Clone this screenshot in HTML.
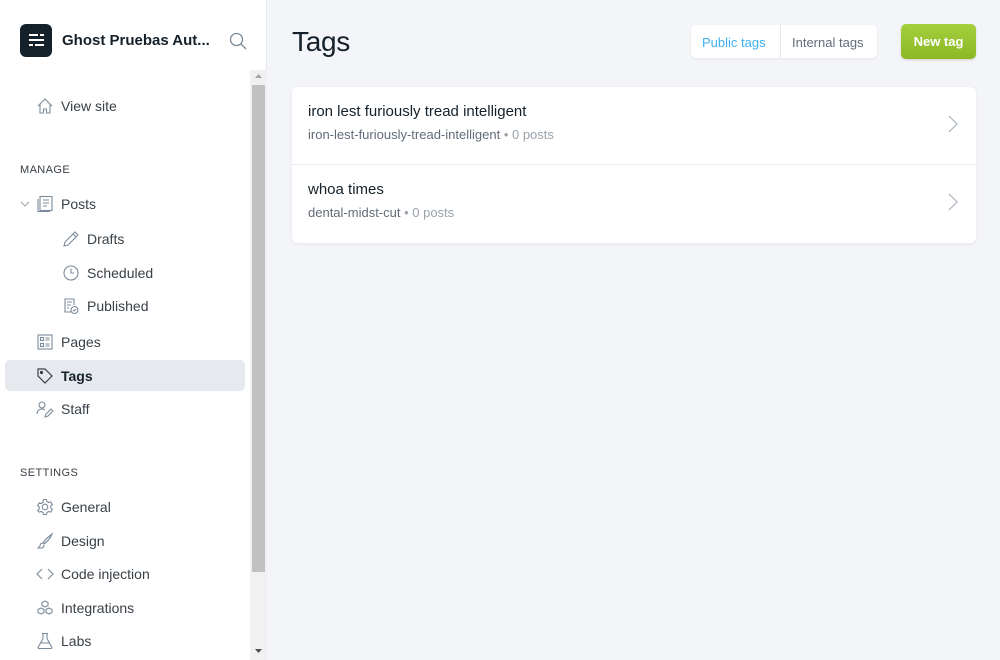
<!DOCTYPE html>
<html><head><meta charset="utf-8"><style>
*{box-sizing:border-box;margin:0;padding:0}
body{width:1000px;height:660px;overflow:hidden;font-family:"Liberation Sans",sans-serif;background:#f4f5f8;color:#15212a;position:relative}
.side{position:absolute;left:0;top:0;width:267px;height:660px;background:#fff;border-right:1px solid #e5e8ec}
.logo{position:absolute;left:20px;top:24px;width:32px;height:33px;background:#15212a;border-radius:6px}
.title{position:absolute;left:62px;top:32px;font-size:15px;font-weight:bold;color:#15212a;letter-spacing:0}
.search{position:absolute;left:229px;top:32px}
.sb{position:absolute;left:250px;top:70px;width:17px;height:590px;background:#f1f1f1}
.thumb{position:absolute;left:252px;top:85px;width:13px;height:487px;background:#c1c1c1}
.item{position:absolute;font-size:14px;color:#394047;display:flex;align-items:center}
.item svg{position:absolute;left:-25px;top:-1px}
.head{position:absolute;left:20px;font-size:11px;letter-spacing:.4px;color:#394047}
.sel{position:absolute;left:5px;top:360px;width:240px;height:31px;background:#e6e9ee;border-radius:5px}
.main h1{position:absolute;left:292px;top:26px;font-size:28px;font-weight:normal;color:#15212a;letter-spacing:-.3px}
.seg{position:absolute;left:691px;top:25px;width:186px;height:33px;background:#fff;border-radius:5px;box-shadow:0 1px 2px rgba(0,0,0,.06);font-size:13px}
.seg span{position:absolute;top:10px}
.btn{position:absolute;left:901px;top:24px;width:75px;height:35px;border-radius:5px;background:linear-gradient(#a4d03d,#8cb826);color:#fff;font-weight:bold;font-size:13px;text-align:center;line-height:35px;box-shadow:0 1px 2px rgba(0,0,0,.15)}
.card{position:absolute;left:292px;top:87px;width:684px;height:156px;background:#fff;border-radius:6px;box-shadow:0 1px 3px rgba(0,0,0,.06)}
.row{position:absolute;left:0;width:684px;height:78px}
.row .n{position:absolute;left:16px;top:16px;font-size:15px;color:#15212a}
.row .s{position:absolute;left:16px;top:40px;font-size:13px;color:#626d79}
.row .s i{font-style:normal;color:#9aa3ab}
.row svg{position:absolute;right:18px;top:28px}
</style></head><body>
<div class="side">
<div class="logo"><svg width="32" height="33" viewBox="0 0 32 33"><g fill="#fff"><rect x="9" y="10" width="9" height="2"/><rect x="20" y="10" width="4" height="2"/><rect x="9" y="15" width="15" height="2"/><rect x="9" y="20" width="4" height="2"/><rect x="15" y="20" width="9" height="2"/></g></svg></div>
<div class="title">Ghost Pruebas Aut...</div>
<svg class="search" width="18" height="18" viewBox="0 0 18 18" fill="none" stroke="#7c8b9a" stroke-width="1.3"><circle cx="7.5" cy="7.5" r="6"/><path d="M12 12l5 5"/></svg>
<div class="sb"></div><div class="thumb"></div>
<svg style="position:absolute;left:254px;top:73px" width="9" height="6"><path d="M1 5h7L4.5 1z" fill="#a3a3a3"/></svg>
<svg style="position:absolute;left:254px;top:648px" width="9" height="6"><path d="M1 1h7L4.5 5z" fill="#505050"/></svg>
<div class="sel"></div>
<div class="item" style="left:61px;top:98px">View site<svg width="18" height="18" viewBox="0 0 18 18" fill="none" stroke="#7c8b9a" stroke-width="1.1"><path d="M2 9L9 2l7 7M4 7.5V16h3.5v-4h3v4H14V7.5"/></svg></div>
<div class="head" style="top:164px">MANAGE</div>
<svg style="position:absolute;left:20px;top:200px" width="10" height="8" fill="none" stroke="#9aa3ab"><path d="M1 2l4 4 4-4"/></svg>
<div class="item" style="left:61px;top:196px">Posts<svg width="18" height="18" viewBox="0 0 18 18" fill="none" stroke="#7c8b9a" stroke-width="1.1"><rect x="4" y="1.5" width="12" height="14"/><path d="M2 4v12.5h12M7 5h6M7 8h6M7 11h4"/></svg></div>
<div class="item" style="left:87px;top:231px">Drafts<svg width="18" height="18" viewBox="0 0 18 18" fill="none" stroke="#7c8b9a" stroke-width="1.1"><path d="M2 16l1-4L13 2l3 3L6 15zM11 4l3 3"/></svg></div>
<div class="item" style="left:87px;top:265px">Scheduled<svg width="18" height="18" viewBox="0 0 18 18" fill="none" stroke="#7c8b9a" stroke-width="1.1"><circle cx="9" cy="9" r="7"/><path d="M9 4.5V9h3"/></svg></div>
<div class="item" style="left:87px;top:298px">Published<svg width="18" height="18" viewBox="0 0 18 18" fill="none" stroke="#7c8b9a" stroke-width="1.1"><path d="M9 15H3V2h9v6M5 5h5M5 8h4M5 11h2"/><circle cx="12.5" cy="13" r="3.5"/><path d="M11 13l1 1 2-2"/></svg></div>
<div class="item" style="left:61px;top:334px">Pages<svg width="18" height="18" viewBox="0 0 18 18" fill="none" stroke="#7c8b9a" stroke-width="1.1"><rect x="2" y="2" width="14" height="14"/><rect x="4.5" y="4.5" width="3" height="3"/><rect x="4.5" y="10.5" width="3" height="3"/><path d="M9.5 5h4M9.5 7h4M9.5 11h4M9.5 13h4"/></svg></div>
<div class="item" style="left:61px;top:368px;font-weight:bold;color:#15212a">Tags<svg width="18" height="18" viewBox="0 0 18 18" fill="none" stroke="#394047" stroke-width="1.2"><path d="M2 2h7l7 7-7 7-7-7z"/><circle cx="5.5" cy="5.5" r="1" fill="#394047"/></svg></div>
<div class="item" style="left:61px;top:401px">Staff<svg width="18" height="18" viewBox="0 0 18 18" fill="none" stroke="#7c8b9a" stroke-width="1.1"><circle cx="6" cy="5" r="3"/><path d="M1 14c0-3 2-5 5-5 1.5 0 2.5.5 3 1M9 17l1-3 5-5 2 2-5 5z"/></svg></div>
<div class="head" style="top:467px">SETTINGS</div>
<div class="item" style="left:61px;top:499px">General<svg width="18" height="18" viewBox="0 0 18 18" fill="none" stroke="#7c8b9a" stroke-width="1.1"><circle cx="9" cy="9" r="2.8"/><path d="M7.5 1.5h3l.5 2 1.8 1 2-.6 1.5 2.6-1.5 1.5v2l1.5 1.5-1.5 2.6-2-.6-1.8 1-.5 2h-3l-.5-2-1.8-1-2 .6L1.7 12.5l1.5-1.5V9L1.7 7.5 3.2 4.9l2 .6 1.8-1z"/></svg></div>
<div class="item" style="left:61px;top:533px">Design<svg width="18" height="18" viewBox="0 0 18 18" fill="none" stroke="#7c8b9a" stroke-width="1.1"><path d="M16 2C12 5 9 8 7 11l1 1c3-2 6-5 8-10zM7 11c-2 0-3 1-3 3l-2 2h3c2 0 3-1 3-3"/></svg></div>
<div class="item" style="left:61px;top:566px">Code injection<svg width="18" height="18" viewBox="0 0 18 18" fill="none" stroke="#7c8b9a" stroke-width="1.1"><path d="M6 4L1 9l5 5M12 4l5 5-5 5"/></svg></div>
<div class="item" style="left:61px;top:600px">Integrations<svg width="18" height="18" viewBox="0 0 18 18" fill="none" stroke="#7c8b9a" stroke-width="1.1"><path d="M9 2l3 1.5v3L9 8 6 6.5v-3zM5 9l3 1.5v3L5 15l-3-1.5v-3zM13 9l3 1.5v3L13 15l-3-1.5v-3z"/></svg></div>
<div class="item" style="left:61px;top:633px">Labs<svg width="18" height="18" viewBox="0 0 18 18" fill="none" stroke="#7c8b9a" stroke-width="1.1"><path d="M6 1.5h6M7 1.5v5L2 15.5c0 .5.5 1 1 1h12c.5 0 1-.5 1-1L11 6.5v-5M5 11h8"/></svg></div>
</div>
<div class="main">
<h1>Tags</h1>
<div class="seg"><span style="left:11px;color:#3eb0ef">Public tags</span><div style="position:absolute;left:89px;top:0;width:1px;height:33px;background:#e5e8ec"></div><span style="left:101px;color:#626d79">Internal tags</span></div>
<div class="btn">New tag</div>
<div class="card">
<div class="row" style="top:0;border-bottom:1px solid #e6ebf0"><div class="n">iron lest furiously tread intelligent</div><div class="s">iron-lest-furiously-tread-intelligent <i>• 0 posts</i></div><svg width="10" height="18" fill="none" stroke="#aab2bb" stroke-width="1.2"><path d="M1 1l8 8-8 8"/></svg></div>
<div class="row" style="top:78px"><div class="n">whoa times</div><div class="s">dental-midst-cut <i>• 0 posts</i></div><svg width="10" height="18" fill="none" stroke="#aab2bb" stroke-width="1.2"><path d="M1 1l8 8-8 8"/></svg></div>
</div>
</div>
</body></html>
